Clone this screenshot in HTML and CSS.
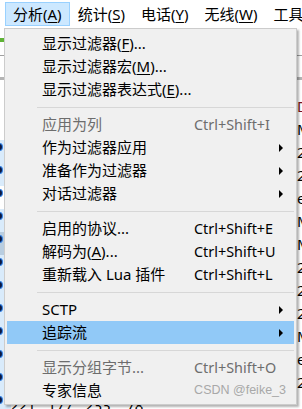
FILE: index.html
```html
<!DOCTYPE html>
<html>
<head>
    <meta charset="utf-8">
    <link rel="stylesheet" href="styles.css">
</head>
<body>
    <div class="app">
        <div class="menubar">
            <span class="mb-item mb-open">分析(<u>A</u>)</span>
            <span class="mb-item">统计(<u>S</u>)</span>
            <span class="mb-item">电话(<u>Y</u>)</span>
            <span class="mb-item">无线(<u>W</u>)</span>
            <span class="mb-item">工具(<u>T</u>)</span>
        </div>
        <div class="toolbar"><span class="tb-fin"></span></div>
        <div class="filterbar"></div>
        <div class="packets">
            <div class="pkt"><span class="mark"></span><span class="info red">D</span></div>
            <div class="pkt"><span class="mark"></span><span class="info">M</span></div>
            <div class="pkt sel"><span class="mark dot"></span><span class="info">2</span></div>
            <div class="pkt sel"><span class="mark dot"></span><span class="info">2</span></div>
            <div class="pkt"><span class="mark dot"></span><span class="info">e</span></div>
            <div class="pkt sel"><span class="mark dot"></span><span class="info">M</span></div>
            <div class="pkt cur"><span class="mark dot"></span><span class="info">M</span></div>
            <div class="pkt sel"><span class="mark dot"></span><span class="info">2</span></div>
            <div class="pkt sel"><span class="mark dot"></span><span class="info">2</span></div>
            <div class="pkt sel"><span class="mark dot"></span><span class="info">2</span></div>
            <div class="pkt sel"><span class="mark dot"></span><span class="info">M</span></div>
            <div class="pkt sel"><span class="mark dot"></span><span class="info">e</span></div>
            <div class="pkt sel"><span class="mark dot"></span><span class="info">2</span></div>
            <div class="pkt sel"><span class="mark dot"></span><span class="addr">221&nbsp;&nbsp;&nbsp;177&nbsp;&nbsp;&nbsp;233&nbsp;&nbsp;&nbsp;&nbsp;78</span></div>
        </div>
    </div>

    <div class="menu">
        <div class="mi"><span class="lbl">显示过滤器(<u>F</u>)...</span></div>
        <div class="mi"><span class="lbl">显示过滤器宏(<u>M</u>)...</span></div>
        <div class="mi"><span class="lbl">显示过滤器表达式(<u>E</u>)...</span></div>
        <div class="sep"></div>
        <div class="mi off"><span class="lbl">应用为列</span><span class="key">Ctrl+Shift+I</span></div>
        <div class="mi"><span class="lbl">作为过滤器应用</span><span class="key"></span><span class="arrow"></span></div>
        <div class="mi"><span class="lbl">准备作为过滤器</span><span class="key"></span><span class="arrow"></span></div>
        <div class="mi"><span class="lbl">对话过滤器</span><span class="key"></span><span class="arrow"></span></div>
        <div class="sep"></div>
        <div class="mi"><span class="lbl">启用的协议...</span><span class="key">Ctrl+Shift+E</span></div>
        <div class="mi"><span class="lbl">解码为(<u>A</u>)...</span><span class="key">Ctrl+Shift+U</span></div>
        <div class="mi"><span class="lbl">重新载入 Lua 插件</span><span class="key">Ctrl+Shift+L</span></div>
        <div class="sep"></div>
        <div class="mi"><span class="lbl">SCTP</span><span class="key"></span><span class="arrow"></span></div>
        <div class="mi hot"><span class="lbl">追踪流</span><span class="key"></span><span class="arrow"></span></div>
        <div class="sep"></div>
        <div class="mi off"><span class="lbl">显示分组字节...</span><span class="key">Ctrl+Shift+O</span></div>
        <div class="mi"><span class="lbl">专家信息</span></div>
        <div class="watermark">CSDN @feike_3</div>
    </div>
</body>
</html>
```

FILE: styles.css
```css
body {
    margin: 0;
    width: 302px;
    height: 409px;
    overflow: hidden;
    background: #ffffff;
    font-family: "Noto Sans", "Noto Sans CJK SC", sans-serif;
    font-size: 15px;
    color: #000000;
}

u {
    text-decoration: underline;
    text-underline-offset: 2px;
}

/* menu bar */

.menubar {
    display: flex;
    align-items: center;
    height: 28px;
    padding-left: 5px;
    white-space: nowrap;
    overflow: hidden;
}

.mb-item {
    flex: none;
    height: 24px;
    line-height: 23px;
    padding: 0 7px;
    border: 1px solid transparent;
    box-sizing: border-box;
}

.mb-open {
    background: #cce8ff;
    border-color: #99d1ff;
}

/* window behind the menu */

.app {
    width: 302px;
    height: 409px;
    overflow: hidden;
}

.toolbar {
    height: 28px;
    border-bottom: 1px solid #a0a0a0;
    box-sizing: border-box;
    padding-top: 10px;
}

.tb-fin {
    display: block;
    width: 5px;
    height: 4px;
    background: #5fb336;
}

.filterbar {
    height: 24px;
    border-bottom: 3px solid #b4b4b4;
    box-sizing: border-box;
}

.packets {
    padding-top: 14px;
}

.pkt {
    display: flex;
    align-items: center;
    height: 23px;
    overflow: hidden;
    white-space: nowrap;
}

.pkt.sel .mark {
    background: #d9ebfb;
}

.pkt.cur .mark {
    background: #b8cde0;
}

.mark {
    width: 11px;
    height: 23px;
    flex: none;
    position: relative;
}

.mark.dot::before {
    content: "";
    position: absolute;
    left: -3px;
    top: 4px;
    width: 5px;
    height: 6px;
    border-radius: 50%;
    background: #0b1740;
    box-shadow: 0 0 0 1px #2f7de0;
}

.info {
    margin-left: 286px;
}

.info.red {
    color: #7a1020;
}

.addr {
    margin-left: -1px;
}

/* dropdown */

.menu {
    position: absolute;
    left: 4px;
    top: 28px;
    width: 293px;
    box-sizing: border-box;
    padding: 3px 2px 2px 2px;
    background: #f0f0f0;
    border: 1px solid #cccccc;
    box-shadow: 2px 2px 2px rgba(0, 0, 0, 0.3);
    white-space: nowrap;
}

.mi {
    display: grid;
    grid-template-columns: 152px 1fr 20px;
    align-items: center;
    height: 23px;
    line-height: 23px;
    padding-left: 35px;
}

.mi.hot {
    background: #91c9f7;
}

.mi.off {
    color: #6d6d6d;
}

.key {
    font-size: 14.4px;
}

.arrow {
    width: 0;
    height: 0;
    margin-left: 5px;
    border-left: 4px solid #000000;
    border-top: 4px solid transparent;
    border-bottom: 4px solid transparent;
}

.sep {
    height: 1px;
    margin: 6px 0 5px 30px;
    background: #d7d7d7;
}

.watermark {
    position: absolute;
    right: 10px;
    bottom: 7px;
    font-family: "Liberation Sans", Arial, sans-serif;
    font-size: 12.5px;
    color: #a8a8a8;
}
```
